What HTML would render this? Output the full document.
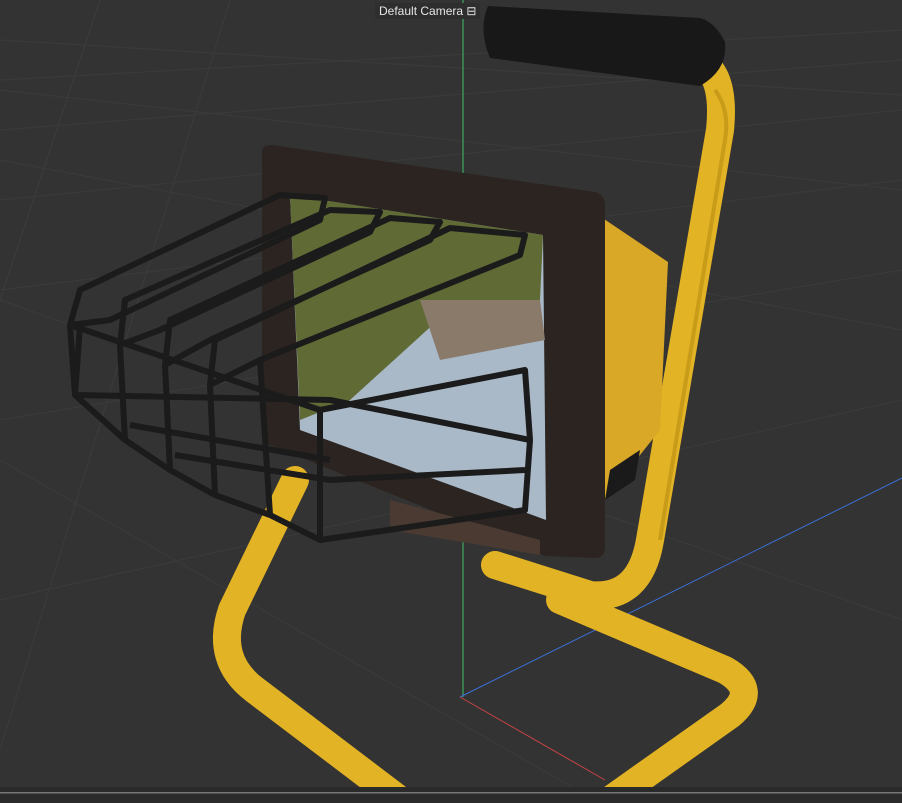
<!DOCTYPE html>
<html><head><style>
html,body{margin:0;padding:0;background:#333;width:902px;height:803px;overflow:hidden}
.lbl{position:absolute;left:375px;top:3px;padding:1px 4px;background:#2e2e2e;color:#e6e6e6;font:12px "Liberation Sans",sans-serif}
</style></head><body>
<svg width="902" height="803" style="position:absolute;left:0;top:0">
<rect width="902" height="803" fill="#333"/>
<g stroke="#3a3a3a" stroke-width="1.2" fill="none">
<line x1="0" y1="130" x2="902" y2="60"/><line x1="0" y1="200" x2="902" y2="110"/>
<line x1="0" y1="290" x2="902" y2="180"/><line x1="0" y1="420" x2="902" y2="270"/>
<line x1="0" y1="600" x2="902" y2="400"/><line x1="0" y1="80" x2="902" y2="30"/>
<line x1="0" y1="40" x2="902" y2="95"/><line x1="0" y1="90" x2="902" y2="190"/>
<line x1="0" y1="160" x2="902" y2="330"/><line x1="0" y1="300" x2="902" y2="620"/>
<line x1="0" y1="460" x2="600" y2="803"/><line x1="100" y1="0" x2="0" y2="300"/>
<line x1="230" y1="0" x2="0" y2="750"/>
</g>
<line x1="463" y1="0" x2="463" y2="697" stroke="#3fbf6a" stroke-width="1"/>
<line x1="460" y1="697" x2="902" y2="478" stroke="#3b6fd6" stroke-width="1"/>
<line x1="460" y1="697" x2="605" y2="780" stroke="#c84444" stroke-width="1"/>
<g fill="none" stroke="#e2b324" stroke-width="28" stroke-linecap="round" stroke-linejoin="round">
<path d="M705 65 Q725 80 720 130 L650 540 Q640 600 590 595 L495 565"/>
<path d="M295 480 L232 610 Q215 660 255 690 L400 800"/>
<path d="M560 600 L725 670 Q760 690 730 715 L610 800"/>
</g>
<g fill="none" stroke="#b88a12" stroke-width="4" opacity="0.6">
<path d="M715 90 Q730 110 725 140 L660 540"/>
</g>
<path d="M488 6 Q478 30 490 58 L700 86 Q728 70 725 42 Q715 22 700 18 Z" fill="#181818"/>
<path d="M598 215 L668 262 L660 430 L600 505 Z" fill="#d8a826"/>
<path d="M610 470 L640 450 L635 480 L605 500Z" fill="#1a1a1a"/>
<path d="M262 152 Q262 145 272 145 L595 192 Q605 195 605 205 L605 548 Q604 558 595 558 L545 556 L270 445 Q262 440 262 430 Z" fill="#2b2420"/>
<path d="M290 195 L543 235 L546 520 L300 430 Z" fill="#a9b9c8"/>
<path d="M290 195 L543 235 L540 300 L460 300 L350 400 L300 420 Z" fill="#5f6a35"/>
<path d="M420 300 L540 300 L545 340 L440 360 Z" fill="#8a7a6a"/>
<path d="M390 500 L540 540 L540 555 L390 530Z" fill="#4a3a32"/>
<g fill="none" stroke="#1b1b1b" stroke-width="6" stroke-linejoin="round">
<path d="M70 325 L80 290 L280 195 L325 198 L320 220 L110 320 Z"/>
<path d="M120 345 L125 300 L330 210 L380 212 L370 232 L160 330Z"/>
<path d="M165 365 L170 320 L390 218 L440 222 L430 240 L210 340Z"/>
<path d="M210 385 L215 340 L450 228 L525 235 L520 255 L260 360Z"/>
<path d="M70 325 L320 410 L525 370 L530 440 L330 400 L75 395 Z"/>
<path d="M75 395 L125 440 L170 470 L215 495 L270 515 L320 540 L525 510 L530 440"/>
<path d="M75 395 L80 325 M125 440 L120 345 M170 470 L165 365 M215 495 L210 385 M270 515 L260 360 M320 540 L320 410"/>
<path d="M130 425 L330 460 M175 455 L330 480 L525 470"/>
</g>
<rect x="0" y="787" width="902" height="5" fill="#2a2a2a"/>
<rect x="0" y="792" width="902" height="1.5" fill="#777"/>
<rect x="0" y="793.5" width="902" height="10" fill="#2b2b2b"/>
</svg>
<div class="lbl">Default Camera ⊟</div>
</body></html>
